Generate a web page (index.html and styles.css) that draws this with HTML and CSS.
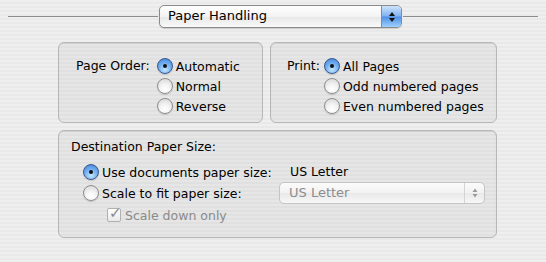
FILE: index.html
```html
<!DOCTYPE html>
<html lang="en">
<head>
    <meta charset="UTF-8">
    <title>Print - Paper Handling</title>
    <link rel="stylesheet" href="styles.css">
</head>
<body>
    <div class="sheet">
        <div class="pane-bar">
            <div class="rule rule-left"></div>
            <div class="popup popup-main">
                <span class="popup-text">Paper Handling</span>
                <span class="popup-cap">
                    <svg width="8" height="12" viewBox="0 0 8 12"><path d="M4 1 L7 5 L1 5 Z M4 11 L7 7 L1 7 Z" fill="#111"/></svg>
                </span>
            </div>
            <div class="rule"></div>
        </div>

        <div class="panels">
            <div class="row-boxes">
                <div class="group box-order">
                    <div class="field-label">Page Order:</div>
                    <div class="choices">
                        <label class="choice"><span class="radio on"></span>Automatic</label>
                        <label class="choice"><span class="radio"></span>Normal</label>
                        <label class="choice"><span class="radio"></span>Reverse</label>
                    </div>
                </div>
                <div class="group box-print">
                    <div class="field-label">Print:</div>
                    <div class="choices">
                        <label class="choice"><span class="radio on"></span>All Pages</label>
                        <label class="choice"><span class="radio"></span>Odd numbered pages</label>
                        <label class="choice"><span class="radio"></span>Even numbered pages</label>
                    </div>
                </div>
            </div>

            <div class="group box-dest">
                <div class="dest-title">Destination Paper Size:</div>
                <div class="dest-grid">
                    <label class="choice"><span class="radio on"></span>Use documents paper size:</label>
                    <div class="dest-value">US Letter</div>
                    <label class="choice"><span class="radio"></span>Scale to fit paper size:</label>
                    <div class="popup popup-off">
                        <span class="popup-text">US Letter</span>
                        <span class="popup-cap">
                            <svg width="8" height="12" viewBox="0 0 8 12"><path d="M4 1.5 L6.5 5 L1.5 5 Z M4 10.5 L6.5 7 L1.5 7 Z" fill="#9a9a9a"/></svg>
                        </span>
                    </div>
                </div>
                <label class="choice check-row"><span class="check">&#10003;</span>Scale down only</label>
            </div>
        </div>
    </div>
</body>
</html>
```

FILE: styles.css
```css
body { margin: 0; font-family: "DejaVu Sans", Verdana, sans-serif; font-size: 12.5px; color: #000; }
.sheet { width: 546px; height: 262px; background: repeating-linear-gradient(to bottom, #efefef 0, #efefef 2px, #e9e9e9 2px, #e9e9e9 4px); overflow: hidden; }

.pane-bar { display: flex; align-items: center; padding: 5px 8px 0 8px; height: 23px; }
.rule { flex: 1; height: 1px; background: #8c8c8c; }
.rule-left { flex: none; width: 150px; }
.popup { display: flex; align-items: stretch; border-radius: 5px; box-sizing: border-box; }
.popup-main { width: 243px; height: 23px; margin: 0 1px; border: 1px solid #8a8a8a; background: linear-gradient(#ffffff, #f3f3f3 50%, #e6e6e6 51%, #fafafa); box-shadow: 0 1px 1px rgba(0,0,0,0.15); }
.popup-text { flex: 1; padding-left: 8px; line-height: 20px; font-size: 13px; }
.popup-main .popup-cap { width: 19px; border-left: 1px solid #6f8fbf; border-radius: 0 4px 4px 0; background: linear-gradient(#cfe3fb, #7fb2ef 48%, #4f8fe3 52%, #9fd0ff); display: flex; align-items: center; justify-content: center; }

.panels { padding: 14px 0 0 58px; width: 439px; }
.row-boxes { display: flex; gap: 7px; }
.group { box-sizing: border-box; border: 1px solid #b7b7b7; border-radius: 6px; background: rgba(0,0,0,0.035); box-shadow: inset 0 1px 1px rgba(0,0,0,0.08); }
.box-order { width: 205px; height: 81px; display: flex; padding: 13px 0 0 17px; }
.box-print { width: 227px; height: 81px; display: flex; padding: 13px 0 0 16px; }
.field-label { line-height: 20px; margin-right: 7px; }
.box-print .field-label { margin-right: 4px; }
.choices { display: flex; flex-direction: column; }
.choice { display: flex; align-items: center; height: 20px; white-space: nowrap; }

.radio { width: 16px; height: 16px; box-sizing: border-box; border-radius: 50%; border: 1px solid #8e8e8e; margin-right: 3px; background: radial-gradient(circle at 50% 75%, #ffffff 0, #f4f4f4 40%, #d2d2d2 100%); box-shadow: 0 1px 1px rgba(0,0,0,0.15); position: relative; }
.radio.on { border-color: #39588e; background: radial-gradient(circle at 50% 75%, #c6e6ff 0, #78b4f2 45%, #3a7dd8 100%); }
.radio.on::after { content: ""; position: absolute; left: 5px; top: 5px; width: 4px; height: 4px; border-radius: 50%; background: #111; }

.box-dest { margin-top: 7px; height: 108px; padding: 6px 0 0 12px; }
.dest-title { line-height: 20px; }
.dest-grid { display: grid; grid-template-columns: 196px 206px; padding-left: 12px; margin-top: 5px; row-gap: 1px; }
.dest-value { line-height: 20px; padding-left: 11px; }
.popup-off { height: 22px; margin-top: -1px; border: 1px solid #c4c4c4; background: linear-gradient(#fbfbfb, #f2f2f2 50%, #e9e9e9 51%, #f7f7f7); color: #8c8c8c; }
.popup-off .popup-text { padding-left: 9px; line-height: 20px; }
.popup-off .popup-cap { width: 19px; border-left: 1px solid #d4d4d4; display: flex; align-items: center; justify-content: center; }
.check-row { padding-left: 36px; color: #8a8a8a; margin-top: 1px; }
.check { width: 14px; height: 14px; box-sizing: border-box; border: 1px solid #b0b0b0; border-radius: 2px; background: linear-gradient(#ffffff, #e9e9e9); margin-right: 4px; font-size: 15px; line-height: 9px; color: #8a8a8a; text-indent: 1px; }
```
